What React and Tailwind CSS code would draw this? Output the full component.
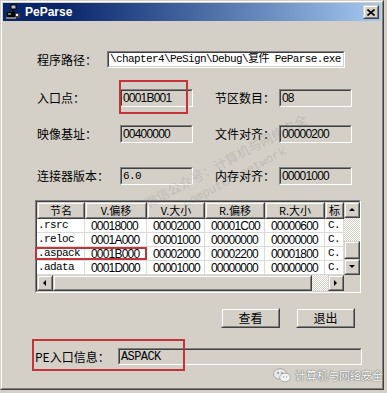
import React from "react";

// win2000 style bevels
const sunkenOut = "border border-t-[#808080] border-l-[#808080] border-r-white border-b-white";
const sunkenIn = "border border-t-[#404040] border-l-[#404040] border-r-[#d4d0c8] border-b-[#d4d0c8]";
const raisedOut = "border border-t-[#d4d0c8] border-l-[#d4d0c8] border-r-[#404040] border-b-[#404040]";
const raisedIn = "border border-t-white border-l-white border-r-[#808080] border-b-[#808080]";

const cjk = "font-['Noto_Sans_CJK_SC',sans-serif] text-[12px] text-black";
const num = "font-['Liberation_Sans','Noto_Sans_CJK_SC',sans-serif] text-[12px] tracking-[-0.8px] text-black";
const mono = "font-['Liberation_Mono','Noto_Sans_CJK_SC',monospace] text-[11px] tracking-[-0.6px] text-black";
const checker = "bg-[repeating-conic-gradient(#ffffff_0_25%,#d4d0c8_0_50%)] bg-[length:2px_2px]";

const sections = [
  [".rsrc", "00018000", "00002000", "00001C00", "00000600", "C."],
  [".reloc", "0001A000", "00001000", "00000000", "00000000", "C."],
  [".aspack", "0001B000", "00002000", "00002200", "00001800", "C."],
  [".adata", "0001D000", "00001000", "00000000", "00000000", "C."],
];
const heads = ["节名", "V.偏移", "V.大小", "R.偏移", "R.大小", "标"];
const colW = ["w-[48px]", "w-[62px]", "w-[58px]", "w-[60px]", "w-[60px]", "w-[19px]"];

function Edit({ className = "", bg = "bg-[#d4d0c8]", text = num, children }) {
  return (
    <div className={`${sunkenOut} ${className}`}>
      <div className={`h-full ${sunkenIn} ${bg} flex items-center pl-[1px] overflow-hidden whitespace-nowrap leading-none ${text}`}>
        {children}
      </div>
    </div>
  );
}

function Raised({ className = "", children }) {
  return (
    <div className={`${raisedOut} bg-[#d4d0c8] shrink-0 ${className}`}>
      <div className={`w-full h-full ${raisedIn} flex items-center justify-center overflow-hidden`}>{children}</div>
    </div>
  );
}

function Arrow({ dir }) {
  const pts = {
    up: "1,5 4,2 7,5",
    down: "1,2 4,5 7,2",
    left: "5,1 2,4 5,7",
    right: "2,1 5,4 2,7",
  }[dir];
  return (
    <svg width="8" height="8" viewBox="0 0 8 8">
      <polygon points={pts} fill="#000" />
    </svg>
  );
}

function Field({ label, value, text, labelW }) {
  return (
    <>
      <div className={`${cjk} ${labelW} shrink-0`}>{label}</div>
      <Edit className="w-[73px] h-[18px] shrink-0" text={text}>{value}</Edit>
    </>
  );
}

function SectionTable() {
  return (
    <div className={`${sunkenOut} w-[326px] h-[93px]`}>
      <div className={`h-full ${sunkenIn} bg-white flex flex-col`}>
        <div className="flex">
          <div className="w-[307px]">
            <div className="flex h-[17px]">
              {heads.map((h, i) => (
                <Raised key={h} className={`${colW[i]} h-[17px]`}>
                  <span className="font-['Noto_Sans_CJK_SC',sans-serif] text-[11px] leading-none text-black whitespace-nowrap">{h}</span>
                </Raised>
              ))}
            </div>
            {sections.map((row) => (
              <div key={row[0]} className="flex h-[14px]">
                {row.map((c, i) => (
                  <div
                    key={i}
                    className={`${colW[i]} h-[14px] border-r border-b border-[#dcdad5] flex items-center overflow-hidden whitespace-nowrap leading-none ${
                      i === 0 ? `${mono} pl-[1px]` : i === 5 ? `${mono} pl-[3px]` : `${num} pl-[6px]`
                    }`}
                  >
                    {c}
                  </div>
                ))}
              </div>
            ))}
          </div>
          <div className="w-[16px] h-[73px] flex flex-col">
            <Raised className="w-[16px] h-[16px]"><Arrow dir="up" /></Raised>
            <div className={`h-[23px] ${checker}`} />
            <Raised className="w-[16px] h-[18px]" />
            <Raised className="w-[16px] h-[16px]"><Arrow dir="down" /></Raised>
          </div>
        </div>
        <div className="flex h-[16px]">
          <Raised className="w-[16px] h-[16px]"><Arrow dir="left" /></Raised>
          <Raised className="w-[259px] h-[16px]" />
          <div className={`w-[16px] h-[16px] ${checker}`} />
          <Raised className="w-[16px] h-[16px]"><Arrow dir="right" /></Raised>
          <div className="w-[16px] h-[16px] bg-[#d4d0c8]" />
        </div>
      </div>
    </div>
  );
}

function AppIcon() {
  return (
    <svg width="16" height="16" viewBox="0 0 16 16">
      <rect x="6" y="1" width="5" height="4" fill="#c0c0c0" stroke="#000" strokeWidth="1" />
      <rect x="7" y="5" width="2" height="3" fill="#000" />
      <rect x="2" y="8" width="8" height="5" fill="#000" />
      <rect x="3" y="9" width="3" height="2" fill="#40a040" />
      <rect x="10" y="9" width="5" height="5" fill="#404040" />
      <rect x="11" y="10" width="2" height="2" fill="#fff" />
      <rect x="1" y="13" width="10" height="2" fill="#808080" />
    </svg>
  );
}

function WeChat() {
  return (
    <svg width="18" height="15" viewBox="0 0 18 15">
      <ellipse cx="7" cy="6" rx="6.5" ry="5.3" fill="#e8e8e8" stroke="#9a9a9a" strokeWidth="0.8" />
      <ellipse cx="12" cy="9.5" rx="5.3" ry="4.3" fill="#f4f4f4" stroke="#9a9a9a" strokeWidth="0.8" />
      <circle cx="5" cy="5" r="0.9" fill="#888" />
      <circle cx="9" cy="5" r="0.9" fill="#888" />
      <circle cx="10.5" cy="9" r="0.7" fill="#999" />
      <circle cx="13.5" cy="9" r="0.7" fill="#999" />
    </svg>
  );
}

export default function App() {
  return (
    <div className="w-[387px] h-[393px] bg-[#d4d0c8] relative overflow-hidden">
      <div className="w-[384px] h-[390px] border border-t-[#d4d0c8] border-l-[#d4d0c8] border-r-[#404040] border-b-[#404040]">
        <div className="h-full border border-t-white border-l-white border-r-[#808080] border-b-[#808080] p-[1px] flex flex-col">
          {/* title bar */}
          <div className="h-[18px] shrink-0 flex items-center bg-linear-to-r from-[#0a246a] from-[15%] to-[#a6caf0] pl-[2px] pr-[2px]">
            <AppIcon />
            <span className="ml-[4px] text-white font-bold text-[12px] font-['Liberation_Sans',sans-serif]">PeParse</span>
            <div className="flex-1" />
            <Raised className="w-[16px] h-[14px]">
              <svg width="8" height="7" viewBox="0 0 8 7">
                <path d="M0.5 0.5 L7.5 6.5 M7.5 0.5 L0.5 6.5" stroke="#000" strokeWidth="1.6" />
              </svg>
            </Raised>
          </div>

          {/* body */}
          <div className="flex-1 flex flex-col pl-[32px]">
            <div className="mt-[30px] pl-[2px] flex items-center h-[17px]">
              <div className={`${cjk} w-[70px] shrink-0`}>程序路径：</div>
              <Edit className="w-[238px] h-[17px]" bg="bg-white" text={mono}>
                \chapter4\PeSign\Debug\复件 PeParse.exe
              </Edit>
            </div>

            <div className="mt-[21px] pl-[2px] flex items-center h-[18px]">
              <Field label="入口点：" value="0001B001" labelW="w-[83px]" />
              <div className="w-[22px] shrink-0" />
              <Field label="节区数目：" value="08" labelW="w-[64px]" />
            </div>

            <div className="mt-[18px] pl-[2px] flex items-center h-[18px]">
              <Field label="映像基址：" value="00400000" labelW="w-[83px]" />
              <div className="w-[22px] shrink-0" />
              <Field label="文件对齐：" value="00000200" labelW="w-[64px]" />
            </div>

            <div className="mt-[24px] pl-[2px] flex items-center h-[18px]">
              <Field label="连接器版本：" value="6.0" text={mono} labelW="w-[83px]" />
              <div className="w-[22px] shrink-0" />
              <Field label="内存对齐：" value="00001000" labelW="w-[64px]" />
            </div>

            <div className="mt-[15px]">
              <SectionTable />
            </div>

            <div className="mt-[15px] flex pl-[186px] gap-[16px]">
              <Raised className="w-[59px] h-[20px]"><span className={cjk}>查看</span></Raised>
              <Raised className="w-[59px] h-[20px]"><span className={cjk}>退出</span></Raised>
            </div>

            <div className="mt-[20px] flex items-center h-[17px]">
              <div className={`${cjk} w-[83px] shrink-0`}>PE入口信息：</div>
              <Edit className="w-[244px] h-[17px]" text="font-['Liberation_Mono',monospace] text-[12px] tracking-[-0.6px] text-black">
                ASPACK
              </Edit>
            </div>
          </div>
        </div>
      </div>

      {/* diagonal watermark */}
      <div className="absolute left-[120px] top-[150px] w-[220px] -rotate-[28deg] opacity-20 pointer-events-none flex flex-col items-center">
        <span className="font-['Noto_Sans_CJK_SC',sans-serif] text-[13px] text-[#707070] whitespace-nowrap">微信公众号：计算机与网络安全</span>
        <span className="font-['Liberation_Mono',monospace] text-[12px] text-[#707070] whitespace-nowrap">computer-network</span>
      </div>

      {/* red annotation boxes */}
      <div className="absolute left-[119px] top-[80px] w-[69px] h-[34px] border-2 border-[#c4323a] pointer-events-none" />
      <div className="absolute left-[35px] top-[247px] w-[112px] h-[13px] border-2 border-[#c4323a] pointer-events-none" />
      <div className="absolute left-[32px] top-[339px] w-[153px] h-[32px] border-2 border-[#c4323a] pointer-events-none" />

      {/* corner watermark */}
      <div className="absolute left-[273px] top-[367px] flex items-center gap-[4px]">
        <WeChat />
        <span className="font-['Noto_Sans_CJK_SC',sans-serif] text-[11px] text-white whitespace-nowrap [text-shadow:0_0_1px_#555,0_0_1px_#555]">
          计算机与网络安全
        </span>
      </div>
    </div>
  );
}
